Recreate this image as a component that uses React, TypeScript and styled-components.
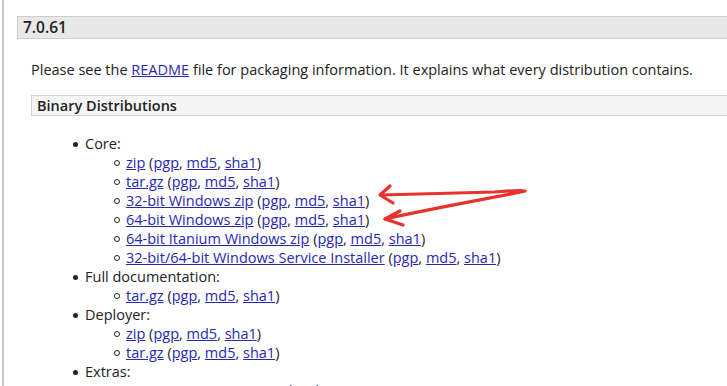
import * as React from 'react';
import styled, { createGlobalStyle } from 'styled-components';

const GlobalStyle = createGlobalStyle`
  body {
    margin: 0;
    background: #fff;
    font-family: 'Open Sans', 'DejaVu Sans', sans-serif;
    font-size: 14.5px;
    color: #222;
  }
`;

const Page = styled.div`
  position: relative;
  margin-left: 2px;
  border-left: 2px solid #c9c9c9;
  padding: 16px 0 0 13px;
  min-height: 400px;
`;

const VersionTitle = styled.h3`
  margin: 0;
  height: 21px;
  line-height: 21px;
  padding: 0 5px;
  background: #e8e8e8;
  border: 1px solid #cdcdcd;
  border-right: none;
  font-size: 15.5px;
  font-weight: 600;
`;

const Section = styled.div`
  padding-left: 14px;
`;

const Text = styled.p`
  margin: 21px 0 16px;
  line-height: 19px;
`;

const SubTitle = styled.h4`
  margin: 0;
  height: 19px;
  line-height: 19px;
  padding: 0 5px;
  background: #f5f5f5;
  border: 1px solid #d2d2d2;
  border-right: none;
  font-size: 14.5px;
  font-weight: 600;
`;

const List = styled.ul`
  margin: 18px 0 0;
  padding-left: 54px;
  line-height: 19px;
  list-style: none;
`;

const Entry = styled.li<{ $sub?: boolean }>`
  &::before {
    content: '';
    display: inline-block;
    box-sizing: border-box;
    width: ${p => (p.$sub ? 6 : 5)}px;
    height: ${p => (p.$sub ? 6 : 5)}px;
    border-radius: 50%;
    background: ${p => (p.$sub ? 'transparent' : '#222')};
    border: ${p => (p.$sub ? '1px solid #222' : 'none')};
    margin-left: -12px;
    margin-right: ${p => (p.$sub ? 6 : 7)}px;
    vertical-align: 2px;
  }
`;

const SubList = styled.ul`
  margin: 0;
  padding-left: 41px;
  list-style: none;
`;

const Link = styled.a`
  color: #2727b3;
  text-decoration: underline;
`;

const Marks = styled.svg`
  position: absolute;
  left: 0;
  top: 0;
  pointer-events: none;
`;

type Item = { label: string };

const Download: React.FC<Item> = ({ label }) => (
  <Entry $sub>
    <Link href="#">{label}</Link> (<Link href="#">pgp</Link>, <Link href="#">md5</Link>,{' '}
    <Link href="#">sha1</Link>)
  </Entry>
);

const groups: { name: string; items: string[] }[] = [
  {
    name: 'Core:',
    items: [
      'zip',
      'tar.gz',
      '32-bit Windows zip',
      '64-bit Windows zip',
      '64-bit Itanium Windows zip',
      '32-bit/64-bit Windows Service Installer',
    ],
  },
  { name: 'Full documentation:', items: ['tar.gz'] },
  { name: 'Deployer:', items: ['zip', 'tar.gz'] },
  { name: 'Extras:', items: ['JMX Remote jar', 'Web services jar'] },
];

export default function App() {
  return (
    <Page>
      <GlobalStyle />
      <VersionTitle>7.0.61</VersionTitle>
      <Section>
        <Text>
          Please see the <Link href="#">README</Link> file for packaging information. It explains what
          every distribution contains.
        </Text>
        <SubTitle>Binary Distributions</SubTitle>
        <List>
          {groups.map(g => (
            <Entry key={g.name}>
              {g.name}
              <SubList>
                {g.items.map(it => (
                  <Download key={it} label={it} />
                ))}
              </SubList>
            </Entry>
          ))}
        </List>
      </Section>
      <Marks width="727" height="386" viewBox="0 0 727 386">
        <g fill="none" stroke="#e8332c" strokeWidth="3.2" strokeLinecap="round" strokeLinejoin="round">
          <path d="M386 186 L376 195 L389 203" />
          <path d="M377 195 C410 194 450 193 490 192 C505 191 515 190 521 191 C500 196 450 204 381 219" />
          <path d="M396 211 L381 219 L399 225" />
        </g>
      </Marks>
    </Page>
  );
}
